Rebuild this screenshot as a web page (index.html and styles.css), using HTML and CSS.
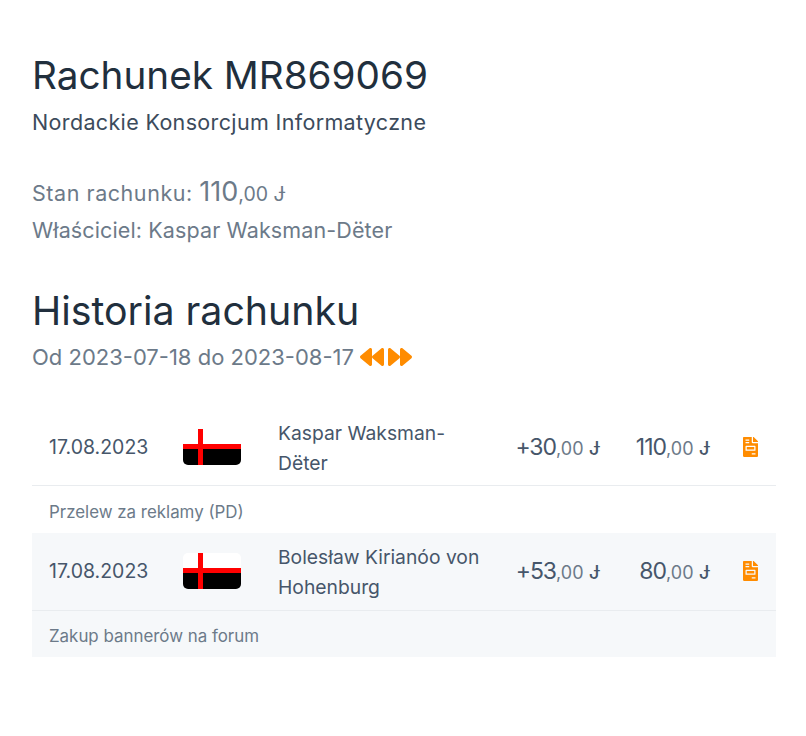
FILE: index.html
```html
<!DOCTYPE html>
<html lang="pl">

<head>
    <meta charset="UTF-8">
    <meta name="viewport" content="width=device-width, initial-scale=1.0">
    <title>Rachunek MR869069</title>
    <link rel="stylesheet" href="styles.css">
</head>

<body>
    <div class="container">
        <h1 class="title">Rachunek MR869069</h1>
        <div class="subtitle">Nordackie Konsorcjum Informatyczne</div>

        <div class="info">
            <div class="info-line balance-line">Stan rachunku: <span class="money-big">110</span><span class="money-rest">,00 Ɉ</span></div>
            <div class="info-line">Właściciel: Kaspar Waksman-Dëter</div>
        </div>

        <h2 class="title">Historia rachunku</h2>
        <div class="range">
            <span>Od 2023-07-18 do 2023-08-17</span>
            <a class="range-nav" href="#">
                <svg viewBox="0 0 512 512"><path d="M11.5 280.6l192 160c20.6 17.2 52.5 2.8 52.5-24.6V96c0-27.4-31.9-41.8-52.5-24.6l-192 160c-15.3 12.8-15.3 36.4 0 49.2zm256 0l192 160c20.6 17.2 52.5 2.8 52.5-24.6V96c0-27.4-31.9-41.8-52.5-24.6l-192 160c-15.3 12.8-15.3 36.4 0 49.2z"/></svg>
            </a>
            <a class="range-nav" href="#">
                <svg viewBox="0 0 512 512"><path d="M500.5 231.4l-192-160C287.9 54.3 256 68.6 256 96v320c0 27.4 31.9 41.8 52.5 24.6l192-160c15.3-12.8 15.3-36.4 0-49.2zm-256 0l-192-160C31.9 54.3 0 68.6 0 96v320c0 27.4 31.9 41.8 52.5 24.6l192-160c15.3-12.8 15.3-36.4 0-49.2z"/></svg>
            </a>
        </div>

        <div class="history">
            <div class="entry">
                <div class="row">
                    <div class="date">17.08.2023</div>
                    <svg class="flag" viewBox="0 0 58 36"><rect width="58" height="18" fill="#fff"/><rect y="18" width="58" height="18" fill="#000"/><rect y="15" width="58" height="5" fill="#f00"/><rect x="15" width="5" height="36" fill="#f00"/></svg>
                    <div class="name">Kaspar Waksman-Dëter</div>
                    <div class="amount"><span class="money-main">+30</span><span class="money-rest">,00</span> <span class="cur">Ɉ</span></div>
                    <div class="amount balance"><span class="money-main">110</span><span class="money-rest">,00</span> <span class="cur">Ɉ</span></div>
                    <a class="doc" href="#">
                        <svg viewBox="0 0 384 512"><path d="M288 256H96v64h192v-64zm89-151L279.1 7c-4.5-4.5-10.6-7-17-7H256v128h128v-6.1c0-6.3-2.5-12.4-7-16.9zm-153 31V0H24C10.7 0 0 10.7 0 24v464c0 13.3 10.7 24 24 24h336c13.3 0 24-10.7 24-24V160H248c-13.2 0-24-10.8-24-24zM64 72c0-4.42 3.58-8 8-8h80c4.42 0 8 3.58 8 8v16c0 4.42-3.58 8-8 8H72c-4.42 0-8-3.58-8-8V72zm0 64c0-4.42 3.58-8 8-8h80c4.42 0 8 3.58 8 8v16c0 4.42-3.58 8-8 8H72c-4.42 0-8-3.58-8-8v-16zm256 304c0 4.42-3.58 8-8 8h-80c-4.42 0-8-3.58-8-8v-16c0-4.42 3.58-8 8-8h80c4.42 0 8 3.58 8 8v16zm0-200v96c0 8.84-7.16 16-16 16H80c-8.84 0-16-7.16-16-16v-96c0-8.84 7.16-16 16-16h224c8.84 0 16 7.16 16 16z"/></svg>
                    </a>
                </div>
                <div class="note">Przelew za reklamy (PD)</div>
            </div>
            <div class="entry striped">
                <div class="row">
                    <div class="date">17.08.2023</div>
                    <svg class="flag" viewBox="0 0 58 36"><rect width="58" height="18" fill="#fff"/><rect y="18" width="58" height="18" fill="#000"/><rect y="15" width="58" height="5" fill="#f00"/><rect x="15" width="5" height="36" fill="#f00"/></svg>
                    <div class="name">Bolesław Kirianóo von Hohenburg</div>
                    <div class="amount"><span class="money-main">+53</span><span class="money-rest">,00</span> <span class="cur">Ɉ</span></div>
                    <div class="amount balance"><span class="money-main">80</span><span class="money-rest">,00</span> <span class="cur">Ɉ</span></div>
                    <a class="doc" href="#">
                        <svg viewBox="0 0 384 512"><path d="M288 256H96v64h192v-64zm89-151L279.1 7c-4.5-4.5-10.6-7-17-7H256v128h128v-6.1c0-6.3-2.5-12.4-7-16.9zm-153 31V0H24C10.7 0 0 10.7 0 24v464c0 13.3 10.7 24 24 24h336c13.3 0 24-10.7 24-24V160H248c-13.2 0-24-10.8-24-24zM64 72c0-4.42 3.58-8 8-8h80c4.42 0 8 3.58 8 8v16c0 4.42-3.58 8-8 8H72c-4.42 0-8-3.58-8-8V72zm0 64c0-4.42 3.58-8 8-8h80c4.42 0 8 3.58 8 8v16c0 4.42-3.58 8-8 8H72c-4.42 0-8-3.58-8-8v-16zm256 304c0 4.42-3.58 8-8 8h-80c-4.42 0-8-3.58-8-8v-16c0-4.42 3.58-8 8-8h80c4.42 0 8 3.58 8 8v16zm0-200v96c0 8.84-7.16 16-16 16H80c-8.84 0-16-7.16-16-16v-96c0-8.84 7.16-16 16-16h224c8.84 0 16 7.16 16 16z"/></svg>
                    </a>
                </div>
                <div class="note">Zakup bannerów na forum</div>
            </div>
        </div>
    </div>
</body>

</html>
```

FILE: styles.css
```css
body {
    font-family: Inter, "Noto Sans", sans-serif;
    margin: 0;
    background: #fff;
    color: #46566a;
}

.container {
    padding: 48px 30px 0 32px;
}

.title {
    margin: 0;
    font-size: 38.7px;
    font-weight: 400;
    line-height: 54px;
    color: #212f3d;
}

.subtitle {
    margin-top: 5px;
    font-size: 21.5px;
    letter-spacing: .35px;
    line-height: 30px;
    color: #3c4b5c;
}

.info {
    margin-top: 38px;
    color: #6c7a89;
    font-size: 21.5px;
    letter-spacing: .12px;
}

.info-line {
    line-height: 37px;
}

.balance-line {
    letter-spacing: .55px;
}

.money-big {
    font-size: 27px;
    letter-spacing: 0;
    line-height: 1;
}

.money-rest {
    font-size: 18px;
    letter-spacing: 0;
    line-height: 1;
    color: #6c7a89;
}

.info .money-rest {
    font-size: 19.5px;
}

h2.title {
    margin-top: 35px;
    font-size: 39.3px;
}

.range {
    display: flex;
    align-items: center;
    height: 32px;
    margin-top: 3px;
    font-size: 22px;
    color: #6c7a89;
}

.range span {
    margin-right: 6px;
}

.range-nav {
    display: flex;
    margin-right: 4px;
}

.range-nav svg {
    width: 24px;
    height: 24px;
    fill: #ff8c00;
}

.history {
    margin-top: 35px;
}

.striped {
    background: #f6f8fa;
}

.row {
    display: flex;
    align-items: center;
    min-height: 76px;
    border-bottom: 1px solid #e9ecef;
    padding: 1px 17px 0;
    font-size: 19.3px;
}

.striped .row {
    padding: 0 17px 1px;
}

.date {
    width: 134px;
    font-size: 19.5px;
}

.flag {
    width: 58px;
    height: 36px;
    border-radius: 5px;
    margin-right: 37px;
}

.name {
    width: 206px;
    padding-top: 1px;
    line-height: 30px;
}

.amount {
    width: 116px;
    text-align: right;
    white-space: nowrap;
}

.balance {
    width: 110px;
}

.money-main {
    font-size: 23px;
    letter-spacing: -1px;
}

.cur {
    font-size: 18px;
    font-weight: 500;
}

.doc {
    display: flex;
    margin-left: 33px;
}

.doc svg {
    width: 15px;
    height: 20px;
    fill: #ff8c00;
}

.note {
    padding: 6px 17px 0;
    line-height: 41px;
    font-size: 16.9px;
    color: #6c7a89;
}

.striped .note {
    padding-top: 4px;
    line-height: 42px;
}
```
